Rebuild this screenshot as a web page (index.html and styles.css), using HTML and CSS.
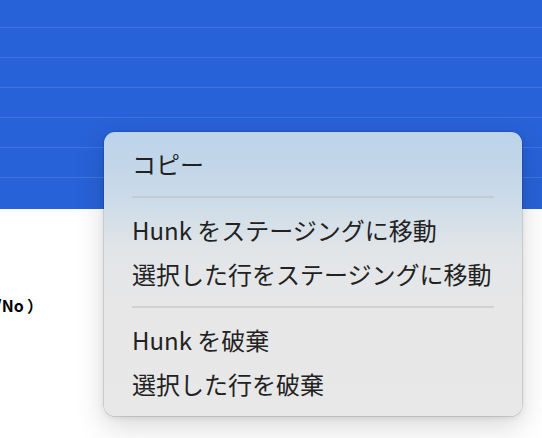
FILE: index.html
```html
<!DOCTYPE html>
<html lang="ja">
<head>
<meta charset="utf-8">
<link rel="stylesheet" href="styles.css">
</head>
<body>
<div class="page">
  <div class="selection">
    <div class="row row-first"></div>
    <div class="row"></div>
    <div class="row"></div>
    <div class="row"></div>
    <div class="row"></div>
    <div class="row"></div>
    <div class="row row-last"></div>
  </div>
  <div class="content">
    <div class="clip"><span class="label">（Yes/No&#8201;）</span></div>
  </div>
  <div class="menu">
    <div class="item">コピー</div>
    <div class="sep sep-top"></div>
    <div class="item">Hunk をステージングに移動</div>
    <div class="item">選択した行をステージングに移動</div>
    <div class="sep"></div>
    <div class="item">Hunk を破棄</div>
    <div class="item">選択した行を破棄</div>
  </div>
</div>
</body>
</html>
```

FILE: styles.css
```css
html, body {
  margin: 0;
  padding: 0;
  background: #ffffff;
}
body {
  font-family: "Noto Sans CJK JP", "Noto Sans", sans-serif;
  width: 542px;
  height: 438px;
  overflow: hidden;
}
.page {
  position: relative;
  width: 542px;
  height: 438px;
}
.selection {
  background: #2862d8;
  height: 209px;
  display: flex;
  flex-direction: column;
}
.row {
  height: 29px;
  border-bottom: 1px solid #3f76de;
}
.row-first {
  height: 27px;
}
.row-last {
  height: 31px;
  border-bottom: none;
}
.content {
  padding-top: 83px;
}
.clip {
  width: 43px;
  display: flex;
  justify-content: flex-end;
  overflow: hidden;
  white-space: nowrap;
}
.label {
  font-size: 16px;
  font-weight: 700;
  line-height: 26px;
  color: #000;
  flex-shrink: 0;
  text-spacing-trim: space-all;
}
.menu {
  position: absolute;
  left: 104px;
  top: 132px;
  width: 418px;
  height: 284px;
  box-sizing: border-box;
  padding: 10px 0;
  border-radius: 11px;
  background: linear-gradient(to bottom, #bcd3ea 0%, #c8d9e9 20%, #d3dfe8 30%, #e2e5e8 42%, #e7e7e8 60%, #e8e8e8 100%);
  box-shadow: 0 0 0 0.5px rgba(0, 0, 0, 0.22), 0 10px 30px rgba(0, 0, 0, 0.16), 0 2px 6px rgba(0, 0, 0, 0.08);
  display: flex;
  flex-direction: column;
}
.item {
  height: 44px;
  line-height: 44px;
  font-size: 24px;
  color: #222;
  padding-left: 28px;
  white-space: nowrap;
}
.sep {
  height: 2px;
  margin: 10px 28px;
  background: #d1d1d1;
}
.sep-top {
  background: #c3ccd4;
}
```
